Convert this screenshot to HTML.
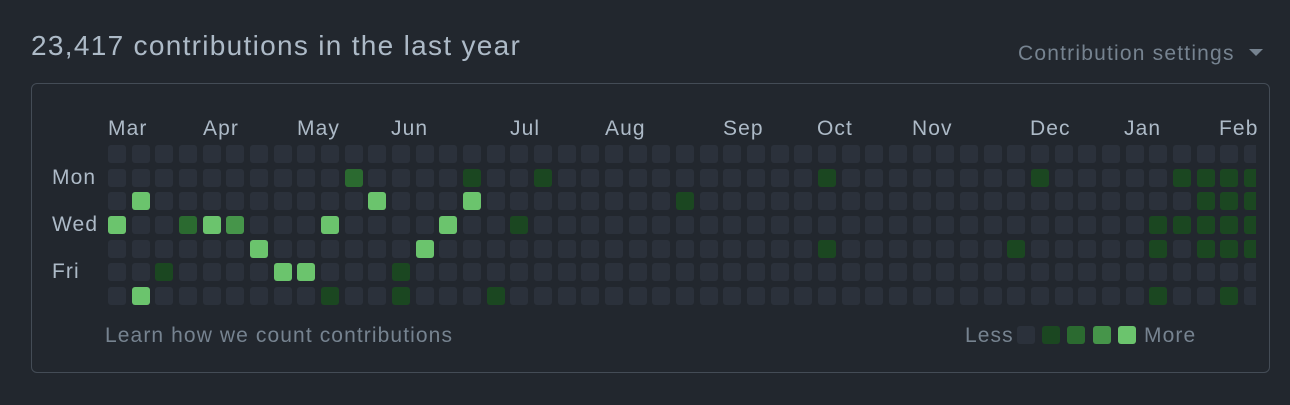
<!DOCTYPE html>
<html><head><meta charset="utf-8"><style>
body{margin:0;width:1290px;height:405px;background:#22272e;font-family:"Liberation Sans",sans-serif;overflow:hidden;position:relative}
.t{position:absolute;white-space:nowrap;font-size:21px;letter-spacing:1.1px}
#box{position:absolute;left:31px;top:83px;width:1237px;height:288px;border:1px solid #444c56;border-radius:6px}
.c{position:absolute;width:18px;height:18px;border-radius:3px;background:#2b313b}
#grid{position:absolute;left:108px;top:145px;width:1148px;height:162px;overflow:hidden}
.m{position:absolute;top:117px;color:#adbac7}
</style></head><body>
<div class="t" style="left:31px;top:30px;font-size:28px;letter-spacing:1.3px;color:#adbac7">23,417 contributions in the last year</div>
<div class="t" style="left:1018px;top:42px;letter-spacing:1.2px;color:#768390">Contribution settings</div>
<svg style="position:absolute;left:1249px;top:49px" width="14" height="8"><path d="M0 0h14L7 7z" fill="#768390"/></svg>
<div id="box"></div>
<div class="m t" style="left:108px">Mar</div><div class="m t" style="left:203px">Apr</div><div class="m t" style="left:297px">May</div><div class="m t" style="left:391px">Jun</div><div class="m t" style="left:510px">Jul</div><div class="m t" style="left:605px">Aug</div><div class="m t" style="left:723px">Sep</div><div class="m t" style="left:817px">Oct</div><div class="m t" style="left:912px">Nov</div><div class="m t" style="left:1030px">Dec</div><div class="m t" style="left:1124px">Jan</div><div class="m t" style="left:1219px">Feb</div>
<div class="t" style="left:52px;top:166px;color:#adbac7">Mon</div>
<div class="t" style="left:52px;top:213px;color:#adbac7">Wed</div>
<div class="t" style="left:52px;top:260px;color:#adbac7">Fri</div>
<div id="grid"></div>
<div class="t" style="left:105px;top:324px;color:#768390">Learn how we count contributions</div>
<div class="t" style="left:965px;top:324px;color:#768390">Less</div>
<div class="c" style="left:1017px;top:326px"></div>
<div class="c" style="left:1042px;top:326px;background:#1b4721"></div>
<div class="c" style="left:1067px;top:326px;background:#2b6a30"></div>
<div class="c" style="left:1093px;top:326px;background:#46954a"></div>
<div class="c" style="left:1118px;top:326px;background:#6bc46d"></div>
<div class="t" style="left:1144px;top:324px;color:#768390">More</div>
<script>
var col=["#2b313b","#1b4721","#2b6a30","#46954a","#6bc46d"];
var L={
1:{10:2,15:1,18:1,30:1,39:1,45:1,46:1,47:1,48:1},
2:{1:4,11:4,15:4,24:1,46:1,47:1,48:1},
3:{0:4,3:2,4:4,5:3,9:4,14:4,17:1,44:1,45:1,46:1,47:1,48:1},
4:{6:4,13:4,30:1,38:1,44:1,46:1,47:1,48:1},
5:{2:1,7:4,8:4,12:1},
6:{1:4,9:1,12:1,16:1,44:1,47:1}};
var ys=[0,24,47,71,95,118,142],h="";
for(var r=0;r<7;r++)for(var c=0;c<49;c++){var l=(L[r]&&L[r][c])||0;
h+='<div class="c" style="left:'+Math.round(c*23.67)+'px;top:'+ys[r]+'px;background:'+col[l]+'"></div>';}
document.getElementById("grid").innerHTML=h;
</script>
</body></html>
